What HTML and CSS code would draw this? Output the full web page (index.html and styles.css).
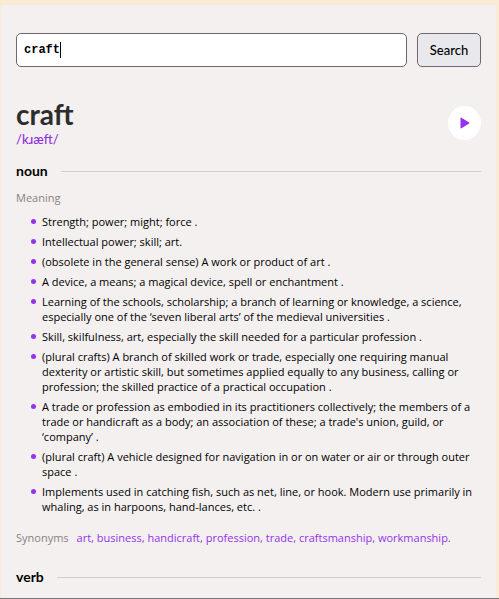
FILE: index.html
```html
<!DOCTYPE html>
<html lang="en">
<head>
<meta charset="utf-8">
<title>Dictionary</title>
<meta name="viewport" content="width=device-width, initial-scale=1">
<link rel="stylesheet" href="styles.css">
</head>
<body>
<main class="card">
  <form class="search">
    <div class="field">
      <input class="field-input" type="text" value="craft" aria-label="Word">
      <span class="caret"></span>
    </div>
    <button class="search-button" type="button">Search</button>
  </form>
  <header class="word">
    <div>
      <h1 class="word-title">craft</h1>
      <p class="phonetic">/kɹæft/</p>
    </div>
    <button class="play" type="button" aria-label="Play pronunciation">
      <svg class="play-icon" viewBox="0 0 10 12"><path d="M1 .5 9.2 5.6Q9.6 6 9.2 6.4L1 11.5Q.5 11.6.5 11V1Q.5.4 1 .5Z"/></svg>
    </button>
  </header>
  <section>
    <h2 class="part">noun</h2>
    <h3 class="label">Meaning</h3>
    <ul class="meanings">
      <li>Strength; power; might; force .</li>
      <li>Intellectual power; skill; art.</li>
      <li>(obsolete in the general sense) A work or product of art .</li>
      <li>A device, a means; a magical device, spell or enchantment .</li>
      <li>Learning of the schools, scholarship; a branch of learning or knowledge, a science, especially one of the ‘seven liberal arts’ of the medieval universities .</li>
      <li>Skill, skilfulness, art, especially the skill needed for a particular profession .</li>
      <li>(plural crafts) A branch of skilled work or trade, especially one requiring manual dexterity or artistic skill, but sometimes applied equally to any business, calling or profession; the skilled practice of a practical occupation .</li>
      <li>A trade or profession as embodied in its practitioners collectively; the members of a trade or handicraft as a body; an association of these; a trade's union, guild, or ‘company’ .</li>
      <li>(plural craft) A vehicle designed for navigation in or on water or air or through outer space .</li>
      <li>Implements used in catching fish, such as net, line, or hook. Modern use primarily in whaling, as in harpoons, hand-lances, etc. .</li>
    </ul>
    <div class="synonyms">
      <h3 class="label">Synonyms</h3>
      <p class="synonym-list">art, business, handicraft, profession, trade, craftsmanship, workmanship.</p>
    </div>
  </section>
  <section>
    <h2 class="part">verb</h2>
  </section>
</main>
</body>
</html>
```
FILE: styles.css
```css
* {
  box-sizing: border-box;
}

body {
  margin: 0;
  min-height: 100vh;
  display: flex;
  padding: 5px 3px 0 1px;
  background: #faebd7;
  border-bottom: 1px solid #77757a;
  color: #000;
  font: 500 11px/15px "Open Sans", Lato, sans-serif;
}

h1, h2, h3, p, ul {
  margin: 0;
  padding: 0;
}

.card {
  flex: 1;
  padding: 28px 15px 10px;
  background: #f4f0f0;
}

.search {
  display: flex;
  gap: 10px;
}

.field {
  position: relative;
  flex: 1;
  font: bold 12px/16px "Liberation Mono", monospace;
}

.field-input {
  width: 100%;
  height: 34px;
  padding: 0 7px;
  border: 1px solid #6b696c;
  border-radius: 5px;
  background: #fff;
  color: #000;
  font: inherit;
}

.caret {
  position: absolute;
  top: 9px;
  left: calc(8px + 5ch);
  width: 1px;
  height: 16px;
  background: #000;
}

.search-button {
  width: 64px;
  height: 34px;
  padding: 0;
  border: 1px solid #6b696c;
  border-radius: 5px;
  background: #e9e9ed;
  color: #000;
  font: 500 13px/16px Lato, sans-serif;
}

.word {
  display: flex;
  align-items: center;
  justify-content: space-between;
  margin-top: 31px;
}

.word-title {
  color: #2d2d2d;
  font-family: Lato, sans-serif;
  font-size: 28px;
  line-height: 32px;
}

.phonetic {
  color: #8f2fe0;
  font-family: Lato, sans-serif;
  font-size: 13px;
  line-height: 18px;
}

.play {
  display: grid;
  place-items: center;
  width: 33px;
  height: 34px;
  padding: 0;
  border: 0;
  border-radius: 50%;
  background: #fff;
}

.play-icon {
  width: 10px;
  height: 12px;
  fill: #9333ea;
}

.part {
  display: flex;
  align-items: center;
  gap: 13px;
  margin-top: 13px;
  font-family: Lato, sans-serif;
  font-size: 14px;
  line-height: 20px;
}

.part::after {
  content: "";
  flex: 1;
  height: 1px;
  background: #cfcdcd;
}

.label {
  color: #858383;
  font-size: 11px;
  font-weight: 400;
  line-height: 16px;
}

.part + .label {
  margin-top: 9px;
}

.meanings {
  display: grid;
  gap: 5px;
  margin-top: 8px;
  padding-left: 26px;
  list-style: none;
}

.meanings li {
  position: relative;
}

.meanings li::before {
  content: "";
  position: absolute;
  top: 5px;
  left: -11px;
  width: 5px;
  height: 5px;
  border-radius: 50%;
  background: #9333ea;
}

.synonyms {
  display: flex;
  gap: 8px;
  margin: 16px 0 21px;
}

.synonym-list {
  color: #9333ea;
  line-height: 16px;
}
```
